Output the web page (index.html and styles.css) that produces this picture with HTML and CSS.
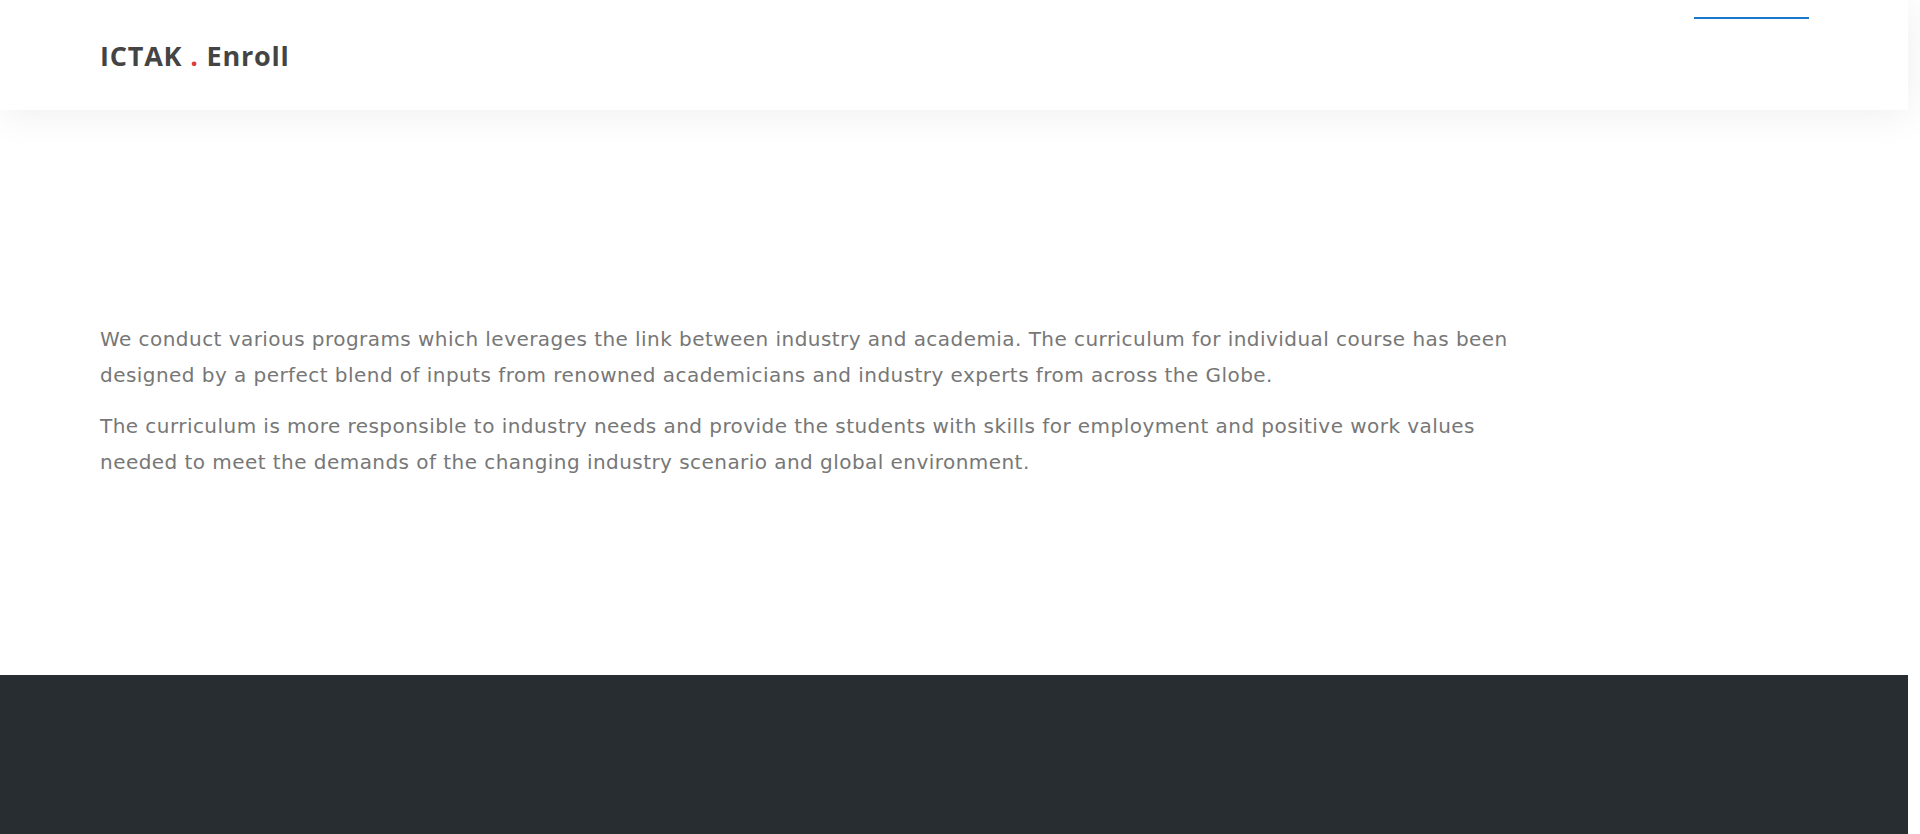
FILE: index.html
```html
<!DOCTYPE html>
<html lang="en">
<head>
<meta charset="utf-8">
<title>ICTAK Enroll</title>
<link rel="stylesheet" href="styles.css">
</head>
<body>
<div class="page">
  <header class="site-header">
    <a class="logo" href="#">ICTAK <span class="dot">.</span> Enroll</a>
    <nav class="nav">
      <span class="nav-active"></span>
    </nav>
  </header>
  <main class="about">
    <div class="about-text">
      <p>We conduct various programs which leverages the link between industry and academia. The curriculum for individual course has been designed by a perfect blend of inputs from renowned academicians and industry experts from across the Globe.</p>
      <p>The curriculum is more responsible to industry needs and provide the students with skills for employment and positive work values needed to meet the demands of the changing industry scenario and global environment.</p>
    </div>
  </main>
  <footer class="site-footer"></footer>
</div>
</body>
</html>
```
FILE: styles.css
```css
html, body {
  margin: 0;
  padding: 0;
  background: #ffffff;
}
body {
  font-family: "DejaVu Sans", "Open Sans", sans-serif;
  overflow: hidden;
}
.page {
  width: 1908px;
  min-height: 834px;
  display: flex;
  flex-direction: column;
}
.site-header {
  height: 110px;
  box-sizing: border-box;
  padding: 0 100px;
  display: flex;
  align-items: center;
  justify-content: space-between;
  background: #fff;
  box-shadow: 0 4px 40px rgba(0, 0, 0, 0.07);
  position: relative;
  z-index: 2;
}
.logo {
  font-family: "Open Sans", sans-serif;
  font-weight: 700;
  font-size: 27px;
  color: #444444;
  text-decoration: none;
  letter-spacing: 0.8px;
  line-height: 1;
}
.dot {
  color: #e03a3c;
}
.nav {
  align-self: flex-start;
  padding-top: 17px;
  margin-right: -1px;
}
.nav-active {
  display: block;
  width: 115px;
  height: 2px;
  background: #1977cc;
}
.about {
  padding: 211px 100px 0;
  height: 565px;
  box-sizing: border-box;
}
.about-text {
  width: 1430px;
}
.about-text p {
  margin: 0 0 15px;
  font-size: 20px;
  line-height: 36px;
  letter-spacing: 0.45px;
  color: #777777;
}
.site-footer {
  background: #282d31;
  flex: 1;
  min-height: 159px;
}
```
